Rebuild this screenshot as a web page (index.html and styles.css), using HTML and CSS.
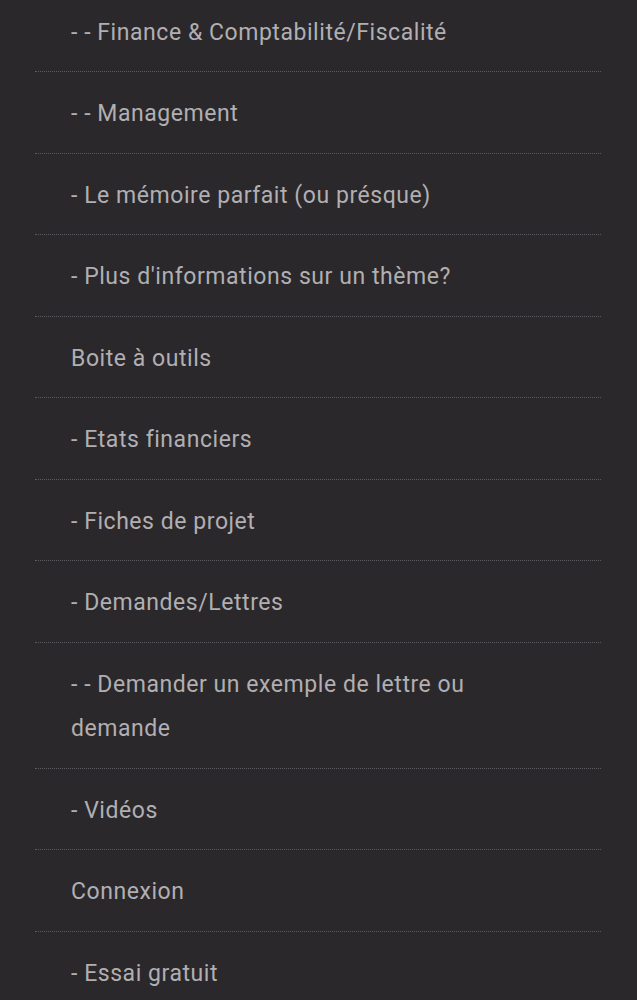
FILE: index.html
```html
<!DOCTYPE html>
<html lang="fr">

<head>
    <meta charset="UTF-8">
    <meta name="viewport" content="width=device-width, initial-scale=1.0">
    <title>Menu</title>
    <link rel="stylesheet" href="styles.css">
</head>

<body>
    <nav class="mobile-menu">
        <ul class="menu-list">
            <li class="menu-item"><a href="#">- - Finance &amp; Comptabilité/Fiscalité</a></li>
            <li class="menu-item"><a href="#">- - Management</a></li>
            <li class="menu-item"><a href="#">- Le mémoire parfait (ou présque)</a></li>
            <li class="menu-item"><a href="#">- Plus d'informations sur un thème?</a></li>
            <li class="menu-item"><a href="#">Boite à outils</a></li>
            <li class="menu-item"><a href="#">- Etats financiers</a></li>
            <li class="menu-item"><a href="#">- Fiches de projet</a></li>
            <li class="menu-item"><a href="#">- Demandes/Lettres</a></li>
            <li class="menu-item"><a href="#">- - Demander un exemple de lettre ou demande</a></li>
            <li class="menu-item"><a href="#">- Vidéos</a></li>
            <li class="menu-item"><a href="#">Connexion</a></li>
            <li class="menu-item"><a href="#">- Essai gratuit</a></li>
        </ul>
    </nav>
</body>

</html>
```

FILE: styles.css
```css
/* Page */

body {
    margin: 0;
    background: #2a282b;
    font-family: 'Roboto', 'Liberation Sans', sans-serif;
    color: #b1afb2;
    overflow: hidden;
}

/* Mobile menu */

.mobile-menu {
    padding: 0 36px 0 35px;
    margin-top: -9.5px;
}

.menu-list {
    list-style: none;
    margin: 0;
    padding: 0;
}

.menu-item {
    border-bottom: 1px dotted #5c5a5e;
}

.menu-item a {
    display: block;
    padding: 20px 36px 16px 36px;
    font-size: 23px;
    letter-spacing: 0.55px;
    line-height: 44.5px;
    color: inherit;
    text-decoration: none;
}
```
